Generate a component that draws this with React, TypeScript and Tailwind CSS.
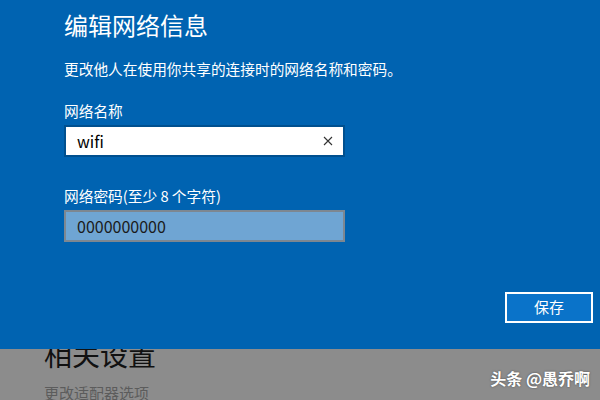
export default function App() {
  return (
    <div
      className="relative h-[400px] w-[600px] overflow-hidden bg-[#8c8c8c]"
      style={{ fontFamily: '"Noto Sans CJK SC", "Liberation Sans", sans-serif' }}
    >
      {/* underlying settings page, dimmed */}
      <div className="absolute left-[44px] top-[334px] text-[28px] leading-[40px] text-[#111]">相关设置</div>
      <div className="absolute left-[44px] top-[382px] text-[15px] leading-[22px] text-[#5c5c5c]">更改适配器选项</div>

      {/* dialog */}
      <div className="relative z-10 flex h-[349px] flex-col bg-[#0063b1] pl-[64px] text-white">
        <h1 className="mt-[7px] text-[24px] leading-[36px] font-normal">编辑网络信息</h1>
        <p className="mt-[15px] text-[14.7px] leading-[22px]">更改他人在使用你共享的连接时的网络名称和密码。</p>

        <label className="mt-[20px] text-[14.7px] leading-[22px]">网络名称</label>
        <div className="mt-[3px] flex h-[32px] w-[281px] items-center border-2 border-[#00508f] bg-white pl-[11px] pr-[10px]">
          <span className="flex-1 text-[16px] text-black">wifi</span>
          <svg width="10" height="10" viewBox="0 0 10 10" className="text-[#333]">
            <path d="M1 1L9 9M9 1L1 9" stroke="currentColor" strokeWidth="1.1" />
          </svg>
        </div>

        <label className="mt-[28px] text-[14.7px] leading-[22px]">网络密码(至少 8 个字符)</label>
        <div className="mt-[3px] flex h-[32px] w-[281px] items-center border-2 border-[#7d8791] bg-[#6fa5d3] pl-[11px]">
          <span className="text-[16px] text-[#1a1a1a]">0000000000</span>
        </div>

        <div className="mt-[50px] flex justify-end pr-[7px]">
          <button className="flex h-[31px] w-[88px] items-center justify-center border-2 border-white bg-[#0a73c9] text-[15px] text-white">
            保存
          </button>
        </div>
      </div>

      <div
        className="absolute right-[10px] top-[366px] z-20 text-[16px] font-bold text-white"
        style={{ textShadow: "0 0 2px rgba(0,0,0,0.5)" }}
      >
        头条 @愚乔啊
      </div>
    </div>
  );
}
